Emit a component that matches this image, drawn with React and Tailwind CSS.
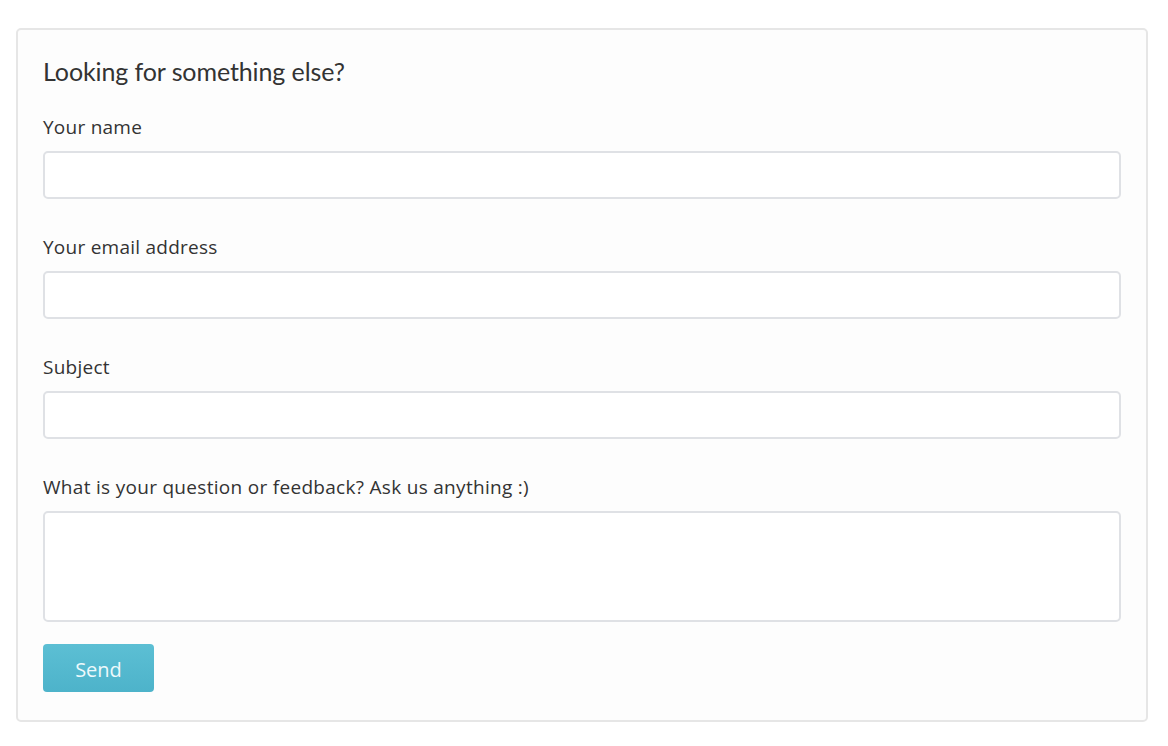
export default function App() {
  const fields = [
    { label: 'Your name' },
    { label: 'Your email address' },
    { label: 'Subject' },
  ];

  return (
    <div className="min-h-[746px] bg-white pl-4 pr-5 pt-7 pb-6">
      <div className="rounded-[5px] border-2 border-[#e6e6e6] bg-[#fdfdfd] px-[25px] pt-[24px] pb-[28px] text-[#333]">
        <h2 className="mb-[25px] text-[25px] leading-[34px] tracking-[-0.1px] text-[#333]" style={{ fontFamily: 'Lato, sans-serif' }}>
          Looking for something else?
        </h2>

        <form onSubmit={e => e.preventDefault()} style={{ fontFamily: '"Open Sans", sans-serif' }}>
          {fields.map(f => (
            <div key={f.label} className="mb-[34px]">
              <label className="mb-[11px] block pt-px text-[19px] leading-[26px] tracking-[0.25px] text-[#333]">{f.label}</label>
              <input type="text" className="block h-[48px] w-full rounded-[5px] border-2 border-[#dfe1e5] bg-white px-3" />
            </div>
          ))}

          <div className="mb-[22px]">
            <label className="mb-[11px] block pt-px text-[19px] leading-[26px] tracking-[0.3px] text-[#333]">What is your question or feedback? Ask us anything :)</label>
            <textarea className="block h-[111px] w-full resize-none rounded-[5px] border-2 border-[#dfe1e5] bg-white px-3 py-2" />
          </div>

          <button type="submit" className="h-[48px] w-[111px] rounded-[4px] bg-gradient-to-b from-[#5cbfd4] to-[#4db3ca] pt-1 text-[20px] text-[#eef9fc]">
            Send
          </button>
        </form>
      </div>
    </div>
  );
}
